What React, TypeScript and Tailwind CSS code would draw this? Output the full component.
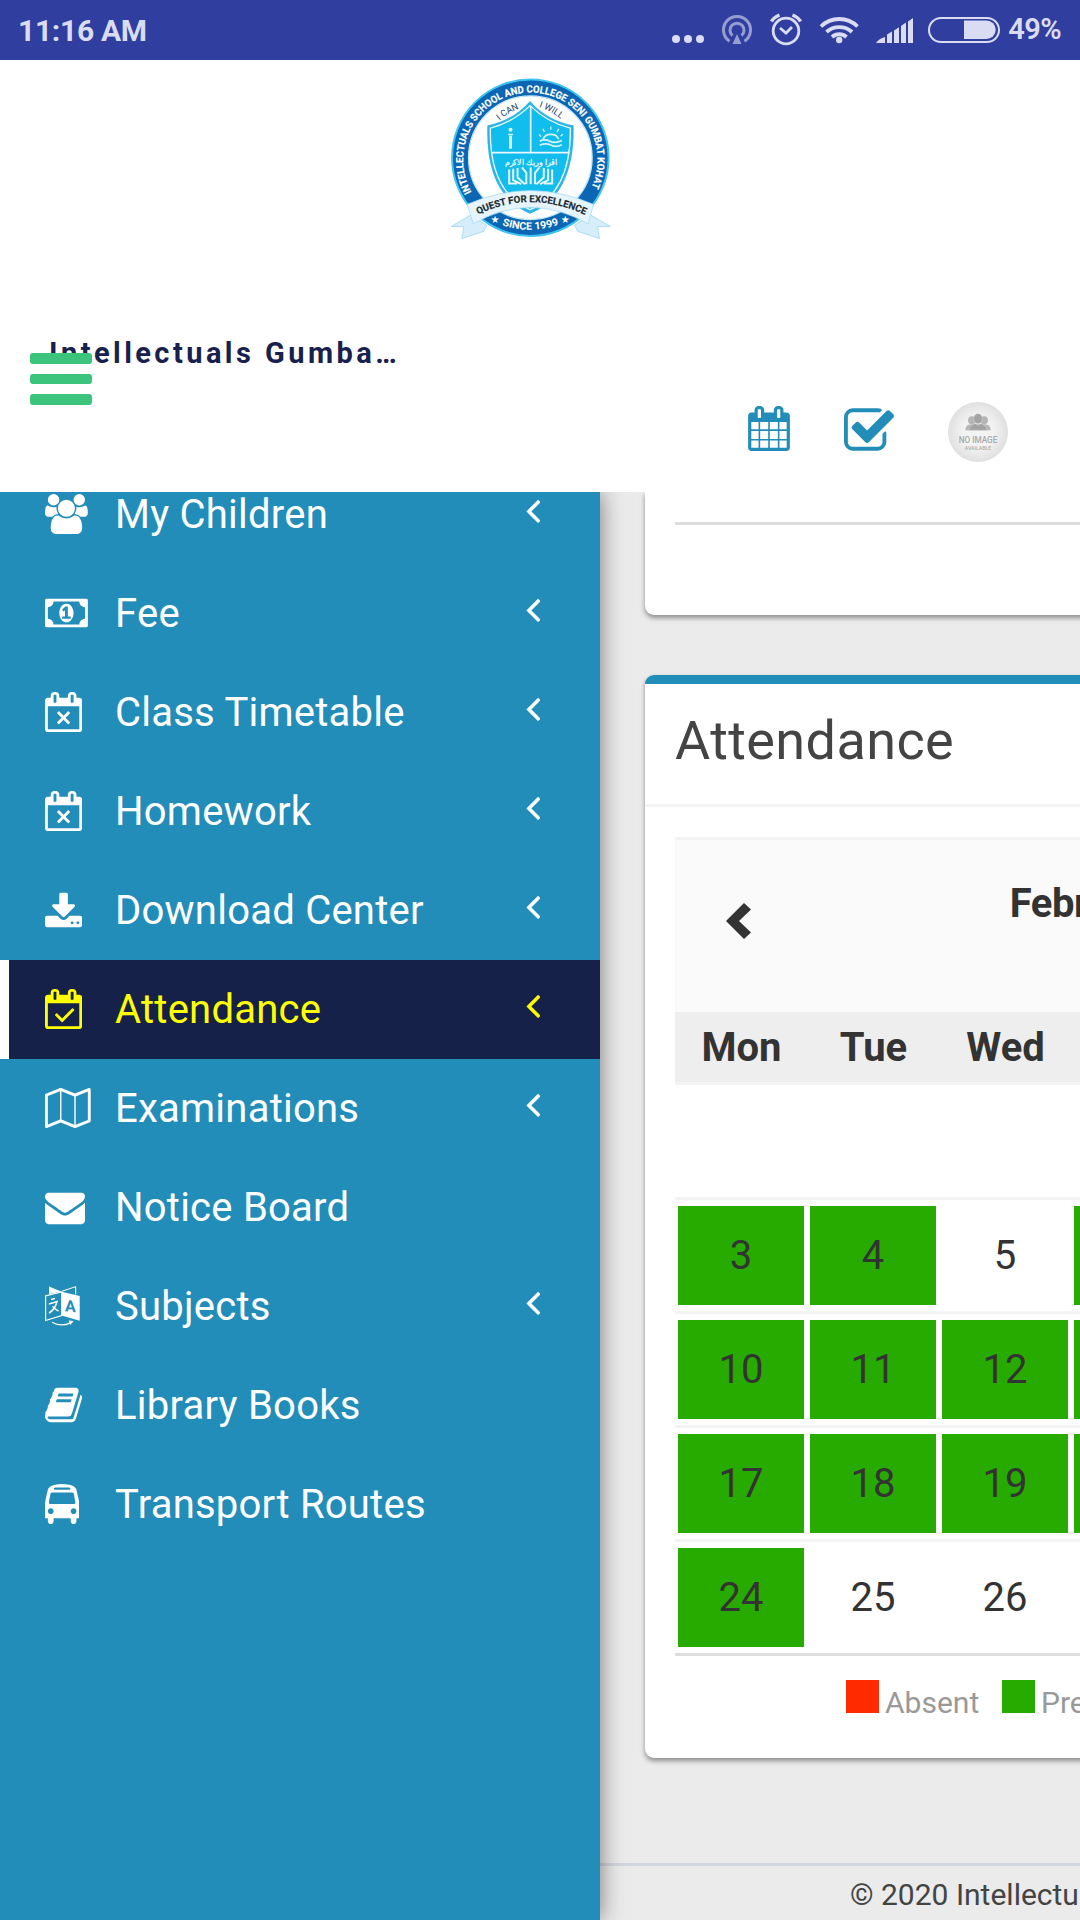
import { useState } from 'react'
import clsx from 'clsx'

const CAL_FRAME =
  'M128 1664h1408v-1024h-1408v1024zm384-1216v-288q0-14-9-23t-23-9h-64q-14 0-23 9t-9 23v288q0 14 9 23t23 9h64q14 0 23-9t9-23zm768 0v-288q0-14-9-23t-23-9h-64q-14 0-23 9t-9 23v288q0 14 9 23t23 9h64q14 0 23-9t9-23zm384-64v1280q0 52-38 90t-90 38h-1408q-52 0-90-38t-38-90v-1280q0-52 38-90t90-38h128v-96q0-66 47-113t113-47h64q66 0 113 47t47 113v96h384v-96q0-66 47-113t113-47h64q66 0 113 47t47 113v96h128q52 0 90 38t38 90z'

const ICONS = {
  users: {
    box: '0 0 1920 1792',
    d: 'M593 896q-162 5-265 128h-134q-82 0-138-40.5t-56-118.5q0-353 124-353 6 0 43.5 21t97.5 42.5 119 21.5q67 0 133-23-5 37-5 66 0 139 81 256zm1071 637q0 120-73 189.5t-194 69.5h-874q-121 0-194-69.5t-73-189.5q0-53 3.5-103.5t14-109 26.5-108.5 43-97.5 62-81 85.5-53.5 111.5-20q10 0 43 21.5t73 48 107 48 135 21.5 135-21.5 107-48 73-48 43-21.5q61 0 111.5 20t85.5 53.5 62 81 43 97.5 26.5 108.5 14 109 3.5 103.5zm-1024-1277q0 106-75 181t-181 75-181-75-75-181 75-181 181-75 181 75 75 181zm704 384q0 159-112.5 271.5t-271.5 112.5-271.5-112.5-112.5-271.5 112.5-271.5 271.5-112.5 271.5 112.5 112.5 271.5zm576 225q0 78-56 118.5t-138 40.5h-134q-103-123-265-128 81-117 81-256 0-29-5-66 66 23 133 23 59 0 119-21.5t97.5-42.5 43.5-21q124 0 124 353zm-128-609q0 106-75 181t-181 75-181-75-75-181 75-181 181-75 181 75 75 181z',
  },
  money: {
    box: '0 0 1920 1792',
    d: 'M768 1152h384v-96h-128v-448h-114l-148 137 77 80q42-37 55-57h2v288h-128v96zm512-256q0 70-21 142t-59.5 134-101.5 101-138 39-138-39-101.5-101-59.5-134-21-142 21-142 59.5-134 101.5-101 138-39 138 39 101.5 101 59.5 134 21 142zm512 256v-512q-106 0-181-75t-75-181h-1152q0 106-75 181t-181 75v512q106 0 181 75t75 181h1152q0-106 75-181t181-75zm128-832v1152q0 26-19 45t-45 19h-1792q-26 0-45-19t-19-45v-1152q0-26 19-45t45-19h1792q26 0 45 19t19 45z',
  },
  calendarTimes: {
    box: '0 0 1664 1792',
    d: 'M1111 1385l-46 46q-9 9-22 9t-23-9l-188-189-188 189q-10 9-23 9t-22-9l-46-46q-9-9-9-22t9-23l189-188-189-188q-9-10-9-23t9-22l46-46q9-9 22-9t23 9l188 188 188-188q10-9 23-9t22 9l46 46q9 9 9 22t-9 23l-188 188 188 188q9 10 9 23t-9 22z' + CAL_FRAME,
  },
  calendarCheck: {
    box: '0 0 1664 1792',
    d: 'M1303 964l-512 512q-10 9-23 9t-23-9l-288-288q-9-10-9-23t9-22l46-46q9-9 22-9t23 9l220 220 444-444q10-9 23-9t22 9l46 46q9 9 9 22t-9 23z' + CAL_FRAME,
  },
  download: {
    box: '0 0 1664 1792',
    d: 'M1280 1472q0-26-19-45t-45-19-45 19-19 45 19 45 45 19 45-19 19-45zm256 0q0-26-19-45t-45-19-45 19-19 45 19 45 45 19 45-19 19-45zm128-224v320q0 40-28 68t-68 28h-1472q-40 0-68-28t-28-68v-320q0-40 28-68t68-28h465l135 136q58 56 136 56t136-56l136-136h464q40 0 68 28t28 68zm-325-569q17 41-14 70l-448 448q-18 19-45 19t-45-19l-448-448q-31-29-14-70 17-39 59-39h256v-448q0-26 19-45t45-19h256q26 0 45 19t19 45v448h256q42 0 59 39z',
  },
  map: {
    box: '0 0 2048 1792',
    d: 'M2020 11q28 20 28 53v1408q0 20-11 36t-29 23l-640 256q-24 11-48 0l-616-246-616 246q-10 5-24 5-19 0-36-11-28-20-28-53v-1408q0-20 11-36t29-23l640-256q24-11 48 0l616 246 616-246q32-13 60 6zm-1284 135v1270l576 230v-1270zm-608 217v1270l544-217v-1270zm1792 1066v-1270l-544 217v1270z',
  },
  envelope: {
    box: '0 0 1792 1792',
    d: 'M1792 710v794q0 66-47 113t-113 47h-1472q-66 0-113-47t-47-113v-794q44 49 101 87 362 246 497 345 57 42 92.5 65.5t94.5 48 110 24.5h2q51 0 110-24.5t94.5-48 92.5-65.5q170-123 498-345 57-39 100-87zm0-294q0 79-49 151t-122 123q-376 261-468 325-10 7-42.5 31t-54 38.5-52 32.5-57.5 27-50 9h-2q-23 0-50-9t-57.5-27-52-32.5-54-38.5-42.5-31q-91-64-262-182.5t-205-142.5q-62-42-117-115.5t-55-136.5q0-78 41.5-130t118.5-52h1472q65 0 112.5 47t47.5 113z',
  },
  book: {
    box: '0 0 1664 1792',
    d: 'M1639 478q40 57 18 129l-275 906q-19 64-76.5 107.5t-122.5 43.5h-923q-77 0-148.5-53.5t-99.5-131.5q-24-67-2-127 0-4 3-27t4-37q1-8-3-21.5t-3-19.5q2-11 8-21t16.5-23.5 16.5-23.5q23-38 45-91.5t30-91.5q3-10 .5-30t-.5-28q3-11 17-28t17-23q21-36 42-92t25-90q1-9-2.5-32t.5-28q4-13 22-30.5t22-22.5q19-26 42.5-84.5t27.5-96.5q1-8-3-25.5t-2-26.5q2-8 9-18t18-23 17-21q8-12 16.5-30.5t15-35 16-36 19.5-32 26.5-23.5 36-11.5 47.5 5.5l-1 3q38-9 51-9h761q74 0 114 56t18 130l-274 906q-36 119-71.5 153.5t-128.5 34.5h-869q-27 0-38 15-11 16-1 43 24 70 144 70h923q29 0 56-15.5t35-41.5l300-987q7-22 5-57 38 15 59 43zm-1064 2q-4 13 2 22.5t20 9.5h608q13 0 25.5-9.5t16.5-22.5l21-64q4-13-2-22.5t-20-9.5h-608q-13 0-25.5 9.5t-16.5 22.5zm-83 256q-4 13 2 22.5t20 9.5h608q13 0 25.5-9.5t16.5-22.5l21-64q4-13-2-22.5t-20-9.5h-608q-13 0-25.5 9.5t-16.5 22.5z',
  },
  bus: {
    box: '0 0 1536 1792',
    d: 'M384 1216q0-53-37.5-90.5t-90.5-37.5-90.5 37.5-37.5 90.5 37.5 90.5 90.5 37.5 90.5-37.5 37.5-90.5zm1024 0q0-53-37.5-90.5t-90.5-37.5-90.5 37.5-37.5 90.5 37.5 90.5 90.5 37.5 90.5-37.5 37.5-90.5zm-46-396l-72-384q-5-23-22.5-37.5t-40.5-14.5h-918q-23 0-40.5 14.5t-22.5 37.5l-72 384q-5 30 14 53t49 23h1062q30 0 49-23t14-53zm-226-612q0-20-14-34t-34-14h-640q-20 0-34 14t-14 34 14 34 34 14h640q20 0 34-14t14-34zm400 725v603h-128v128q0 53-37.5 90.5t-90.5 37.5-90.5-37.5-37.5-90.5v-128h-768v128q0 53-37.5 90.5t-90.5 37.5-90.5-37.5-37.5-90.5v-128h-128v-603q0-112 25-223l103-454q9-78 97.5-137t230-89 312.5-30 312.5 30 230 89 97.5 137l105 454q23 102 23 223z',
  },
  angleLeft: {
    box: '0 0 640 1792',
    d: 'M627 544q0 13-10 23l-393 393 393 393q10 10 10 23t-10 23l-50 50q-10 10-23 10t-23-10l-466-466q-10-10-10-23t10-23l466-466q10-10 23-10t23 10l50 50q10 10 10 23z',
  },
  calendar: {
    box: '0 0 1664 1792',
    d: 'M128 1664h288v-288h-288v288zm352 0h320v-288h-320v288zm-352-352h288v-320h-288v320zm352 0h320v-320h-320v320zm-352-384h288v-288h-288v288zm736 736h320v-288h-320v288zm-384-736h320v-288h-320v288zm768 736h288v-288h-288v288zm-384-352h320v-320h-320v320zm-352-864v-288q0-13-9.5-22.5t-22.5-9.5h-64q-13 0-22.5 9.5t-9.5 22.5v288q0 13 9.5 22.5t22.5 9.5h64q13 0 22.5-9.5t9.5-22.5zm736 864h288v-320h-288v320zm-384-384h320v-288h-320v288zm384 0h288v-288h-288v288zm32-480v-288q0-13-9.5-22.5t-22.5-9.5h-64q-13 0-22.5 9.5t-9.5 22.5v288q0 13 9.5 22.5t22.5 9.5h64q13 0 22.5-9.5t9.5-22.5zm384-64v1280q0 52-38 90t-90 38h-1408q-52 0-90-38t-38-90v-1280q0-52 38-90t90-38h128v-96q0-66 47-113t113-47h64q66 0 113 47t47 113v96h384v-96q0-66 47-113t113-47h64q66 0 113 47t47 113v96h128q52 0 90 38t38 90z',
  },
  checkSquare: {
    box: '64 128 1664 1408',
    d: 'M1472 930v318q0 119-84.5 203.5t-203.5 84.5h-832q-119 0-203.5-84.5t-84.5-203.5v-832q0-119 84.5-203.5t203.5-84.5h832q63 0 117 25 15 7 18 23 3 17-9 29l-49 49q-10 10-23 10-3 0-9-2-23-6-45-6h-832q-66 0-113 47t-47 113v832q0 66 47 113t113 47h832q66 0 113-47t47-113v-254q0-13 9-22l64-64q10-10 23-10 6 0 12 3 20 8 20 29zm231-489l-814 814q-24 24-57 24t-57-24l-430-430q-24-24-24-57t24-57l110-110q24-24 57-24t57 24l263 263 647-647q24-24 57-24t57 24l110 110q24 24 24 57t-24 57z',
  },
}

type IconName = keyof typeof ICONS

function Icon({ name, className }: { name: IconName; className?: string }) {
  return (
    <svg viewBox={ICONS[name].box} className={className} fill="currentColor" fillRule="nonzero">
      <path d={ICONS[name].d} />
    </svg>
  )
}

function LanguageIcon() {
  return (
    <svg viewBox="0 0 35 40" className="h-10 w-[35px]" fill="none" stroke="currentColor">
      <path d="M4 .5V8l12.700-2.300z" fill="currentColor" stroke="none" />
      <path d="M17 5.200L30.700.7V8.500" />
      <path d="M.6 9.800L16.700 6v23.500L.6 34.500z" strokeWidth="1.200" />
      <path d="M16.700 5.800L34.700 10v24.700l-18-5.200z" fill="currentColor" stroke="none" />
      <path d="M6 13.500l4-1M4 18l8-2.500q-2 8-8 11.500M7.500 20.500q3 3 6 4.500" strokeWidth="1.500" />
      <text
        x="20"
        y="23.500"
        transform="skewY(5)"
        fontSize="16"
        fontWeight="700"
        fontFamily="Roboto, sans-serif"
        fill="#238dba"
        stroke="none"
      >
        A
      </text>
      <path d="M7 36.300q9 5 18.500 .5" strokeWidth="1.300" />
      <path d="M23.500 34.500l5 .5-3 4z" fill="currentColor" stroke="none" />
    </svg>
  )
}

const MENU: { label: string; icon: IconName | 'language'; arrow: boolean }[] = [
  { label: 'My Children', icon: 'users', arrow: true },
  { label: 'Fee', icon: 'money', arrow: true },
  { label: 'Class Timetable', icon: 'calendarTimes', arrow: true },
  { label: 'Homework', icon: 'calendarTimes', arrow: true },
  { label: 'Download Center', icon: 'download', arrow: true },
  { label: 'Attendance', icon: 'calendarCheck', arrow: true },
  { label: 'Examinations', icon: 'map', arrow: true },
  { label: 'Notice Board', icon: 'envelope', arrow: false },
  { label: 'Subjects', icon: 'language', arrow: true },
  { label: 'Library Books', icon: 'book', arrow: false },
  { label: 'Transport Routes', icon: 'bus', arrow: false },
]

const DAYS = ['Mon', 'Tue', 'Wed', 'Thu']
const WEEKS = [
  [3, 4, 5, 6],
  [10, 11, 12, 13],
  [17, 18, 19, 20],
  [24, 25, 26, 27],
]
const PRESENT = [3, 4, 6, 10, 11, 12, 13, 17, 18, 19, 20, 24]

function StatusBar() {
  return (
    <div className="flex h-[60px] items-center justify-between bg-[#303f9f] pr-[19px] pl-[18px] text-[#d9dcf3]">
      <span className="text-[30px] font-bold tracking-[-0.3px]">11:16 AM</span>
      <div className="flex items-center">
        <svg viewBox="672 0 330 60" className="h-[60px] w-[330px]" fill="none" stroke="currentColor">
          <g fill="currentColor" stroke="none">
            <circle cx="676" cy="39" r="4" />
            <circle cx="688" cy="39" r="4" />
            <circle cx="700" cy="39" r="4" />
          </g>
          {/* hotspot */}
          <g opacity="0.6" strokeWidth="3">
            <path d="M729.500 41.200A13.500 13.500 0 1 1 744.500 41.200" />
            <path d="M732.500 35.500A7 7 0 1 1 741.500 35.500" />
            <path d="M737 34l4.500 10h-9z" fill="currentColor" stroke="none" />
          </g>
          {/* alarm */}
          <circle cx="786" cy="31" r="12.800" strokeWidth="2.800" />
          <path d="M780 28l6 5 6-6" strokeWidth="2.800" />
          <path d="M771.500 21.500q2-4 8-6.500M800.500 21.500q-2-4-8-6.500" strokeWidth="3.500" />
          {/* wifi */}
          <g strokeWidth="3.800">
            <path d="M821 26.500a26 26 0 0 1 36.500 0" />
            <path d="M826.500 32a19 19 0 0 1 25.500 0" />
            <path d="M832 37a11 11 0 0 1 14.500 0" />
            <circle cx="839.200" cy="40" r="3.200" fill="currentColor" stroke="none" />
          </g>
          {/* signal */}
          <path
            d="M876 43q3-4.500 9-6v6zM887 43V34.500l5-3V43zM894 43V30.500l5-3.200V43zM901 43V26l5-3.500V43zM908 43V21.500l5-3.500V43z"
            fill="currentColor"
            stroke="none"
          />
          {/* battery */}
          <rect x="929" y="18" width="70" height="24" rx="12" strokeWidth="2" />
          <path d="M964 20.500h22.500a9.200 9.200 0 0 1 0 18.500H964z" fill="currentColor" stroke="none" />
        </svg>
        <span className="ml-[6px] text-[29px] font-semibold tracking-[-0.600px]">49%</span>
      </div>
    </div>
  )
}

function SchoolLogo() {
  return (
    <svg viewBox="3 1 536 536" className="h-[180px] w-[180px]" fontFamily="Roboto, sans-serif">
      <defs>
        <path id="ring" d="M 97 380 A 200 200 0 1 1 447 380" />
        <path id="motto" d="M116 446Q272 373 432 446" />
        <path id="canLeft" d="M180 166Q207 142 245 128" />
        <path id="canRight" d="M298 126Q335 138 370 168" />
        <path id="since" d="M188 478Q272 506 358 476" />
      </defs>
      <circle cx="272" cy="277" r="233" fill="#0b66b4" stroke="#3fc3f0" strokeWidth="6" />
      <circle cx="272" cy="277" r="184" fill="#fff" stroke="#bfe6f7" strokeWidth="4" />
      <text fontSize="30" fontWeight="700" fill="#fff" stroke="#fff" strokeWidth="0.500">
        <textPath href="#ring" textLength="814" lengthAdjust="spacingAndGlyphs">
          INTELLECTUALS SCHOOL AND COLLEGE SENI GUMBAT KOHAT
        </textPath>
      </text>
      <g fontSize="27" fill="#20406f">
        <text><textPath href="#canLeft">I CAN</textPath></text>
        <text><textPath href="#canRight">I WILL</textPath></text>
      </g>
      <path d="M271 108Q320 165 401 181Q405 388 271 444Q137 388 144 181Q222 165 271 108z" fill="#2eb5e8" />
      <path d="M271 122Q322 172 391 189Q394 379 271 432Q149 379 153 189Q220 172 271 122z" fill="#10bdec" stroke="#e9f8fd" strokeWidth="4" />
      <path d="M273 124V264M156 262H388" stroke="#e9f8fd" strokeWidth="5" />
      {/* torch */}
      <path d="M206 208h14M211 214h4v34h-4z" stroke="#d8f3fc" strokeWidth="5" fill="#d8f3fc" />
      <circle cx="213" cy="194" r="6" fill="#d8f3fc" />
      {/* rising sun */}
      <g stroke="#d8f3fc" strokeWidth="5" fill="none">
        <path d="M310 222a24 20 0 0 1 46 0" />
        <path d="M304 214l-6-6M314 200l-5-9M333 194v-10M351 200l6-9M362 213l7-6" strokeWidth="4" />
        <path d="M300 228q15-8 30 0t36-2M300 240q18-8 34 0t32-2" />
      </g>
      <text x="273" y="299" fontSize="25" fontWeight="700" fill="#e4f7fd" textAnchor="middle" direction="rtl" textLength="155" lengthAdjust="spacingAndGlyphs">
        اقرا وربك الاكرم
      </text>
      {/* open books */}
      <g stroke="#e4f7fd" strokeWidth="6" fill="none">
        <path d="M209 312v42h24M221 310v34l24 12M234 308v28l22 20M247 306l13 16v34" />
        <path d="M337 312v42h-24M325 310v34l-24 12M312 308v28l-22 20M299 306l-13 16v34" />
        <path d="M273 306v50" />
      </g>
      {/* ribbon */}
      <path d="M36 482l58-34 48 30-8 18-66 22 6-36zM510 482l-58-34-48 30 8 18 66 22-6-36z" fill="#d5eef9" stroke="#8fd0ee" strokeWidth="2" />
      <path d="M84 416Q272 334 460 416L444 474Q272 376 102 474z" fill="#e6f5fc" stroke="#9fd6ef" strokeWidth="2" />
      <text fontSize="29" fontWeight="700" fill="#222b33" stroke="#222b33" strokeWidth="0.500">
        <textPath href="#motto" textLength="330" lengthAdjust="spacingAndGlyphs">QUEST FOR EXCELLENCE</textPath>
      </text>
      <text fontSize="31" fontWeight="700" fill="#fff">
        <textPath href="#since" textLength="172" lengthAdjust="spacingAndGlyphs">SINCE 1999</textPath>
      </text>
      <g fill="#fff" fontSize="30" textAnchor="middle" fontFamily="DejaVu Sans, sans-serif">
        <text x="167" y="472">★</text>
        <text x="376" y="472">★</text>
      </g>
    </svg>
  )
}

function Avatar() {
  return (
    <svg viewBox="0 0 180 180" className="h-[60px] w-[60px]" fontFamily="Roboto, sans-serif">
      <defs>
        <radialGradient id="avatarBg">
          <stop offset="0.5" stopColor="#f3f3f3" />
          <stop offset="1" stopColor="#e0e0e0" />
        </radialGradient>
      </defs>
      <circle cx="90" cy="90" r="90" fill="url(#avatarBg)" />
      <g fill="#b5b5b5">
        <circle cx="72" cy="55" r="12" />
        <circle cx="108" cy="55" r="12" />
        <path d="M52 85q0-18 18-18h40q18 0 18 18z" />
      </g>
      <g fill="#a3a3a3" stroke="#d8d8d8" strokeWidth="1.500">
        <ellipse cx="90" cy="50" rx="13" ry="15" />
        <path d="M62 85q4-18 20-20l8 5 8-5q16 2 20 20z" />
      </g>
      <text x="90" y="123" fontSize="29" fontWeight="500" fill="#a8a8a8" textAnchor="middle" textLength="116" lengthAdjust="spacingAndGlyphs">NO IMAGE</text>
      <text x="90" y="144" fontSize="16" fontWeight="500" fill="#adadad" textAnchor="middle" textLength="80" lengthAdjust="spacingAndGlyphs">AVAILABLE</text>
    </svg>
  )
}

function Header({ onToggle }: { onToggle: () => void }) {
  return (
    <header className="relative h-[432px] bg-white">
      <div className="pt-[5px] pl-[440px]">
        <SchoolLogo />
      </div>
      <p className="mt-[88px] ml-[49px] h-10 text-[29px] leading-10 font-bold tracking-[3.450px] text-[#18214d]">
        Intellectuals Gumba…
      </p>
      <button onClick={onToggle} className="absolute top-[293px] left-[30px] flex flex-col gap-[10px]">
        <span className="h-[10.500px] w-[62px] rounded-[3px] bg-[#3cc47c]" />
        <span className="h-[10.500px] w-[62px] rounded-[3px] bg-[#3cc47c]" />
        <span className="h-[10.500px] w-[62px] rounded-[3px] bg-[#3cc47c]" />
      </button>
      <div className="mt-[29px] ml-[748px] flex h-[60px] items-center text-[#238dba]">
        <Icon name="calendar" className="mb-[8px] h-[45px] w-[42px]" />
        <Icon name="checkSquare" className="mb-[6px] ml-[54px] h-[43px] w-[50px]" />
        <div className="ml-[54px]">
          <Avatar />
        </div>
      </div>
    </header>
  )
}

function Sidebar() {
  const [active, setActive] = useState('Attendance')

  return (
    <aside className="z-10 h-full w-[600px] shrink-0 overflow-hidden bg-[#238dba] shadow-[0_0_22px_rgba(0,0,0,0.5)]">
      <nav className="-mt-[27px] flex flex-col">
        {MENU.map(item => (
          <button
            key={item.label}
            onClick={() => setActive(item.label)}
            className={clsx(
              'flex h-[99px] items-center border-l-[9px] pr-[60px] pl-9 text-left text-[40px]',
              active === item.label ? 'border-white bg-[#16214a] text-[#ffff00]' : 'border-transparent text-white'
            )}
          >
            <span className="mb-[2px] flex w-[70px] shrink-0">
              {item.icon === 'language' ? <LanguageIcon /> : <Icon name={item.icon} className="h-10" />}
            </span>
            <span className="flex-1 tracking-[0.240px]">{item.label}</span>
            {item.arrow && <Icon name="angleLeft" className="mb-[9px] h-10 stroke-current stroke-[30]" />}
          </button>
        ))}
      </nav>
    </aside>
  )
}

function AttendanceCalendar() {
  return (
    <div className="w-[924px]">
      <div className="flex h-[175px] border-t-[3px] border-[#f4f4f4] bg-[#fafafa]">
        <button className="flex w-[132px] justify-center pt-[63px]">
          <svg viewBox="0 0 25 36" className="-ml-[6px] h-9 w-[25px]" fill="#333">
            <path d="M18 0l7 6.500L13 18l12 11.500L18 36 0 18z" />
          </svg>
        </button>
        <div className="flex-1 pt-[39px] text-center text-[40px] leading-[50px] font-bold tracking-[-0.500px] text-[#333]">
          February 2020
        </div>
        <div className="w-[132px]" />
      </div>
      <div className="flex h-[73px] border-b-[3px] border-[#f4f4f4] bg-[#eee]">
        {DAYS.map(day => (
          <div key={day} className="w-[132px] shrink-0 pl-px text-center text-[40px] leading-[71px] font-bold text-[#333]">
            {day}
          </div>
        ))}
      </div>
      <div className="h-28" />
      {WEEKS.map(week => (
        <div key={week[0]} className="flex h-[114px] gap-[6px] border-t-[3px] border-[#f4f4f4] px-[3px] py-[6px]">
          {week.map(day => (
            <div
              key={day}
              className={clsx(
                'flex w-[126px] shrink-0 items-center justify-center text-[40px] text-[#333]',
                PRESENT.includes(day) && 'bg-[#27ab00]'
              )}
            >
              {day}
            </div>
          ))}
        </div>
      ))}
      <div className="h-[3px] bg-[#ddd]" />
    </div>
  )
}

export default function App() {
  const [menuOpen, setMenuOpen] = useState(true)

  return (
    <div className="flex h-[1920px] w-[1080px] flex-col overflow-hidden font-['Roboto',sans-serif]">
      <StatusBar />
      <Header onToggle={() => setMenuOpen(!menuOpen)} />

      <div className="flex h-[1428px] overflow-hidden bg-[#ebebeb]">
        {menuOpen && <Sidebar />}

        <main className="flex w-[1074px] shrink-0 flex-col">
          <section className="ml-[45px] h-[123px] w-[984px] rounded-b-[9px] bg-white px-[30px] pt-[30px] shadow-[0_3px_5px_rgba(0,0,0,0.4)]">
            <div className="h-[3px] bg-[#ddd]" />
          </section>

          <section className="mt-[60px] ml-[45px] h-[1083px] w-[984px] rounded-[9px] border-t-[9px] border-[#238dba] bg-white shadow-[0_3px_5px_rgba(0,0,0,0.4)]">
            <h3 className="h-[123px] border-b-[3px] border-[#f4f4f4] pt-[25px] pl-[30px] text-[54px] leading-[64px] tracking-[0.400px] text-[#444]">
              Attendance
            </h3>
            <div className="px-[30px] pt-[30px]">
              <AttendanceCalendar />
              <div className="flex pt-6 pl-[171px] text-[30px] leading-[40px] text-[#999]">
                <span className="h-[33px] w-[33px] bg-[#ff2a00]" />
                <span className="ml-[6px] w-[117px] pt-[3px]">Absent</span>
                <span className="h-[33px] w-[33px] bg-[#27ab00]" />
                <span className="ml-[6px] pt-[3px]">Present</span>
              </div>
            </div>
          </section>

          <footer className="mt-[105px] h-[57px] border-t-[3px] border-[#d2d6de] pl-[250px] text-[30px] leading-[58px] whitespace-nowrap text-[#444]">
            © 2020 Intellectuals School
          </footer>
        </main>
      </div>
    </div>
  )
}
